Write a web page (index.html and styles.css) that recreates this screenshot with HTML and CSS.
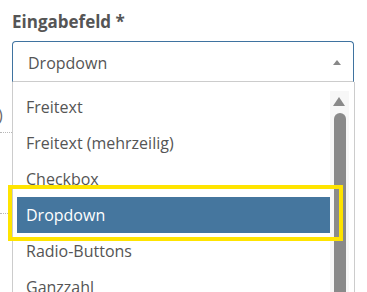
FILE: index.html
```html
<!DOCTYPE html>
<html lang="de">
<head>
<meta charset="utf-8">
<link rel="stylesheet" href="styles.css">
</head>
<body>
<div class="page">
  <div class="field">
    <div class="label">Eingabefeld *</div>
    <div class="select">
      <span class="select-value">Dropdown</span>
      <span class="select-arrow"></span>
    </div>
  </div>
  <div class="below">
    <div class="gutter">
      <div class="gutter-row first"><span class="paren">)</span></div>
      <div class="gutter-row second"></div>
    </div>
    <div class="dropdown">
      <ul class="options">
        <li class="option">Freitext</li>
        <li class="option">Freitext (mehrzeilig)</li>
        <li class="option">Checkbox</li>
        <li class="option selected">Dropdown</li>
        <li class="option">Radio-Buttons</li>
        <li class="option">Ganzzahl</li>
      </ul>
      <div class="scrollbar">
        <div class="scroll-up"></div>
        <div class="scroll-thumb"></div>
      </div>
    </div>
  </div>
  <div class="highlight"></div>
</div>
</body>
</html>
```
FILE: styles.css
```css
html, body {
  margin: 0;
  padding: 0;
  background: #ffffff;
  overflow: hidden;
}
body {
  width: 367px;
  height: 292px;
  font-family: "Open Sans", "Noto Sans", sans-serif;
  color: #555555;
}
.page {
  position: relative;
  height: 292px;
  overflow: hidden;
}
.field {
  padding: 10px 13px 0 12px;
}
.label {
  font-weight: 700;
  font-size: 17px;
  line-height: 23px;
  color: #555555;
  margin-bottom: 8px;
}
.select {
  height: 39px;
  border: 1px solid #3f73a0;
  border-bottom-color: #cccccc;
  border-radius: 4px 4px 0 0;
  display: flex;
  align-items: center;
  justify-content: space-between;
  padding: 0 12px 0 15px;
}
.select-value {
  font-size: 16px;
  line-height: 22px;
  padding-top: 2px;
  color: #555555;
}
.select-arrow {
  width: 0;
  height: 0;
  border-left: 4px solid transparent;
  border-right: 4px solid transparent;
  border-bottom: 5px solid #888888;
  margin-top: 1px;
}
.below {
  display: flex;
  height: 210px;
}
.gutter {
  width: 12px;
  overflow: hidden;
}
.gutter-row {
  border-bottom: 1px dotted #b8b8b8;
  position: relative;
}
.gutter-row.first {
  height: 50px;
}
.gutter-row.second {
  height: 80px;
}
.paren {
  display: block;
  font-size: 16px;
  line-height: 20px;
  padding-top: 23px;
  margin-left: -2px;
  color: #666666;
}
.dropdown {
  width: 333px;
  border-left: 1px solid #cccccc;
  border-right: 1px solid #cccccc;
  padding: 7px 4px 0 4px;
  display: flex;
  align-items: flex-start;
}
.options {
  list-style: none;
  margin: 0;
  padding: 0;
  width: 313px;
}
.option {
  height: 36px;
  line-height: 36px;
  font-size: 16px;
  padding-left: 9px;
  color: #555555;
  white-space: nowrap;
}
.option.selected {
  background: #45769e;
  color: #ffffff;
}
.scrollbar {
  width: 19px;
  margin-top: 2px;
  height: 210px;
  background: #f7f7f7;
  display: flex;
  flex-direction: column;
  align-items: center;
}
.scroll-up {
  width: 0;
  height: 0;
  margin-top: 6px;
  margin-left: -1px;
  border-left: 6px solid transparent;
  border-right: 6px solid transparent;
  border-bottom: 9px solid #8a8a8a;
}
.scroll-thumb {
  margin-top: 7px;
  width: 12px;
  flex: 1;
  background: #8a8a8a;
  border-radius: 6px 6px 0 0;
}
.highlight {
  position: absolute;
  left: 8px;
  top: 185px;
  width: 335px;
  height: 56px;
  box-sizing: border-box;
  border: 4px solid #ffe400;
}
```
